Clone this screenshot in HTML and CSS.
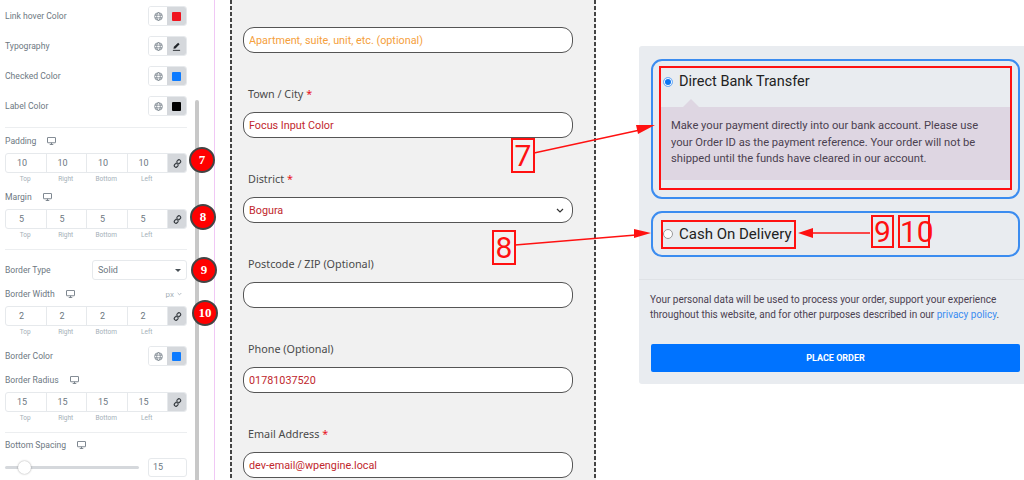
FILE: index.html
```html
<!DOCTYPE html>
<html>
<head>
    <title>Checkout widget style settings</title>
    <link rel="stylesheet" href="styles.css">
</head>
<body>
<svg class="icon-defs" width="0" height="0">
    <defs>
        <symbol id="globe" viewBox="0 0 10 10">
            <g fill="none" stroke="#6d7882" stroke-width=".8">
                <circle cx="5" cy="5" r="4.3"/>
                <ellipse cx="5" cy="5" rx="2" ry="4.3"/>
                <path d="M.8 3.5h8.4M.8 6.5h8.4"/>
            </g>
        </symbol>
        <symbol id="monitor" viewBox="0 0 10 9">
            <path d="M.9.5h8.2a.4.4 0 0 1 .4.4v5.2a.4.4 0 0 1-.4.4H.9a.4.4 0 0 1-.4-.4V.9A.4.4 0 0 1 .9.5z" fill="none" stroke="#6d7882"/>
            <path d="M3 8.5h4M5 6.5v2" stroke="#6d7882"/>
        </symbol>
        <symbol id="link" viewBox="0 0 10 10">
            <g fill="none" stroke="#33383d" stroke-width="1.3" stroke-linecap="round">
                <path d="M4.3 2.6l1-1a1.8 1.8 0 0 1 2.9 2.2L6.900 5.200a1.800 1.800 0 0 1-2.700 0"/>
                <path d="M5.700 7.400l-1 1a1.800 1.800 0 0 1-2.900-2.200L3.100 4.800a1.800 1.800 0 0 1 2.700 0"/>
            </g>
        </symbol>
    </defs>
</svg>

<div class="page">
    <aside class="panel">
        <div class="ctl-row"><span class="ctl-label">Link hover Color</span>
            <div class="ctl-pick"><span class="pick-global"><svg class="globe"><use href="#globe"/></svg></span><span class="pick-value"><i class="swatch swatch-red"></i></span></div>
        </div>
        <div class="ctl-row"><span class="ctl-label">Typography</span>
            <div class="ctl-pick"><span class="pick-global"><svg class="globe"><use href="#globe"/></svg></span><span class="pick-value">
                <svg class="pen" viewBox="0 0 10 10"><path d="M6.800.8l1.700 1.700-4.700 4.600-2.200.5.500-2.200z" fill="#22262a"/><path d="M1 9.300h8" stroke="#22262a"/></svg></span></div>
        </div>
        <div class="ctl-row"><span class="ctl-label">Checked Color</span>
            <div class="ctl-pick"><span class="pick-global"><svg class="globe"><use href="#globe"/></svg></span><span class="pick-value"><i class="swatch swatch-blue"></i></span></div>
        </div>
        <div class="ctl-row"><span class="ctl-label">Label Color</span>
            <div class="ctl-pick"><span class="pick-global"><svg class="globe"><use href="#globe"/></svg></span><span class="pick-value"><i class="swatch swatch-black"></i></span></div>
        </div>

        <hr class="ctl-rule first-rule">

        <div class="ctl-head head-padding"><span class="ctl-label">Padding</span><svg class="monitor"><use href="#monitor"/></svg></div>
        <div class="dims">
            <span>10</span><span>10</span><span>10</span><span>10</span>
            <b><svg class="link"><use href="#link"/></svg></b>
        </div>
        <div class="dim-names"><span>Top</span><span>Right</span><span>Bottom</span><span>Left</span></div>

        <div class="ctl-head"><span class="ctl-label">Margin</span><svg class="monitor"><use href="#monitor"/></svg></div>
        <div class="dims dims-tight">
            <span>5</span><span>5</span><span>5</span><span>5</span>
            <b><svg class="link"><use href="#link"/></svg></b>
        </div>
        <div class="dim-names"><span>Top</span><span>Right</span><span>Bottom</span><span>Left</span></div>

        <hr class="ctl-rule second-rule">

        <div class="border-type">
            <span class="ctl-label">Border Type</span>
            <div class="select-box">Solid<i class="caret"></i></div>
        </div>

        <div class="ctl-head head-width"><span class="ctl-label">Border Width</span><svg class="monitor"><use href="#monitor"/></svg><span class="unit">px <svg viewBox="0 0 6 4"><path d="M.8.8L3 3l2.200-2.200" fill="none" stroke="#a4afb7"/></svg></span></div>
        <div class="dims dims-tight">
            <span>2</span><span>2</span><span>2</span><span>2</span>
            <b><svg class="link"><use href="#link"/></svg></b>
        </div>
        <div class="dim-names"><span>Top</span><span>Right</span><span>Bottom</span><span>Left</span></div>

        <div class="ctl-row row-border-color"><span class="ctl-label">Border Color</span>
            <div class="ctl-pick"><span class="pick-global"><svg class="globe"><use href="#globe"/></svg></span><span class="pick-value"><i class="swatch swatch-blue"></i></span></div>
        </div>

        <div class="ctl-head head-radius"><span class="ctl-label">Border Radius</span><svg class="monitor"><use href="#monitor"/></svg></div>
        <div class="dims">
            <span>15</span><span>15</span><span>15</span><span>15</span>
            <b><svg class="link"><use href="#link"/></svg></b>
        </div>
        <div class="dim-names"><span>Top</span><span>Right</span><span>Bottom</span><span>Left</span></div>

        <hr class="ctl-rule third-rule">

        <div class="ctl-head"><span class="ctl-label">Bottom Spacing</span><svg class="monitor"><use href="#monitor"/></svg></div>
        <div class="slider-row">
            <div class="slider"><i class="slider-knob"></i></div>
            <div class="slider-value">15</div>
        </div>
    </aside>

    <div class="panel-scroll"><div class="scroll-thumb"></div></div>
    <div class="pink-line"></div>

    <main class="canvas">
        <input class="field first-field" type="text" placeholder="Apartment, suite, unit, etc. (optional)">

        <label class="field-label">Town / City <em>*</em></label>
        <input class="field" type="text" value="Focus Input Color">

        <label class="field-label">District <em>*</em></label>
        <div class="field field-select">Bogura
            <svg viewBox="0 0 8 5"><path d="M1 1l3 3 3-3" fill="none" stroke="#333" stroke-width="1.200"/></svg>
        </div>

        <label class="field-label">Postcode / ZIP (Optional)</label>
        <input class="field" type="text">

        <label class="field-label">Phone (Optional)</label>
        <input class="field" type="text" value="01781037520">

        <label class="field-label">Email Address <em>*</em></label>
        <input class="field" type="text" value="dev-email@wpengine.local">
    </main>

    <section class="payment">
        <div class="pay-card">
            <div class="pay-title title-bank"><i class="radio radio-on"></i>Direct Bank Transfer</div>
            <div class="pay-box">Make your payment directly into our bank account. Please use your Order ID as the payment reference. Your order will not be shipped until the funds have cleared in our account.</div>
        </div>
        <div class="pay-card pay-card-cod">
            <div class="pay-title"><i class="radio"></i>Cash On Delivery</div>
        </div>
        <hr class="pay-rule">
        <p class="pay-note">Your personal data will be used to process your order, support your experience throughout this website, and for other purposes described in our <a href="#">privacy policy</a>.</p>
        <button class="place-order">PLACE ORDER</button>
    </section>
</div>

<!-- annotations on top of the screenshot -->
<span class="badge badge-7">7</span>
<span class="badge badge-8">8</span>
<span class="badge badge-9">9</span>
<span class="badge badge-10">10</span>

<div class="mark-rect rect-bank"></div>
<div class="mark-rect rect-cod"></div>
<span class="mark-num num-7">7</span>
<span class="mark-num num-8">8</span>
<span class="mark-num num-9">9</span>
<span class="mark-num num-10">10</span>

<svg class="arrows" viewBox="0 0 1024 480">
    <path d="M534 153L640 130M515 245L636 235M870 233H812" stroke="#f11" stroke-width="1.300" fill="none"/>
    <path d="M655 125L638 134L636 125zM651 233L634 238L634 229zM798 233L813 228V238z" fill="#f11"/>
</svg>
</body>
</html>
```
FILE: styles.css
```css
* {
    box-sizing: border-box;
}
body {
    margin: 0;
    width: 1024px;
    height: 480px;
    overflow: hidden;
    position: relative;
    background: #fff;
    font-family: Roboto, sans-serif;
}
.icon-defs {
    position: absolute;
}
.page {
    display: flex;
    height: 480px;
    overflow: hidden;
}

/* left settings panel */
.panel {
    width: 195px;
    flex: none;
    padding: 1px 8px 0 5px;
}
.ctl-label {
    font-size: 8.600px;
    color: #6d7882;
    white-space: nowrap;
}
.ctl-row {
    height: 30px;
    display: flex;
    align-items: center;
    justify-content: space-between;
}
.ctl-pick {
    display: flex;
    width: 39px;
    height: 20px;
    border-radius: 3px;
    overflow: hidden;
    border: 1px solid #e6e9ec;
}
.pick-global {
    flex: 1;
    background: #fff;
    display: flex;
    align-items: center;
    justify-content: center;
}
.pick-value {
    width: 19px;
    background: #d5d8dc;
    display: flex;
    align-items: center;
    justify-content: center;
}
.globe {
    width: 9px;
    height: 9px;
}
.pen {
    width: 9px;
    height: 9px;
}
.swatch {
    width: 9px;
    height: 9px;
    border-radius: 1px;
}
.swatch-red { background: #f0141e; }
.swatch-blue { background: #0d7bff; }
.swatch-black { background: #000; }

.ctl-rule {
    border: 0;
    height: 1px;
    margin: 0;
    background: #eceef0;
}
.first-rule { margin-top: 6px; }
.second-rule { margin-top: 8px; }
.third-rule { margin-top: 8px; }

.ctl-head {
    height: 14px;
    margin-top: 5px;
    display: flex;
    align-items: center;
    gap: 11px;
}
.head-padding { margin-top: 6px; }
.head-width { margin-top: 7px; }
.head-radius { margin-top: 7px; }
.monitor {
    width: 9px;
    height: 8px;
}
.unit {
    margin-left: auto;
    margin-right: 5px;
    font-size: 8px;
    color: #a4afb7;
    display: flex;
    align-items: center;
    gap: 3px;
}
.unit svg {
    width: 5px;
    height: 4px;
}
.dims {
    margin-top: 5px;
    height: 20px;
    display: flex;
    border: 1px solid #e6e9ec;
    border-radius: 3px;
    overflow: hidden;
}
.dims span {
    width: 40.500px;
    padding-left: 11px;
    font-size: 9px;
    line-height: 18px;
    color: #6d7882;
    border-right: 1px solid #e6e9ec;
}
.dims-tight span {
    padding-left: 13px;
}
.dims b {
    flex: 1;
    background: #d5d8dc;
    display: flex;
    align-items: center;
    justify-content: center;
}
.link {
    width: 9px;
    height: 9px;
}
.dim-names {
    display: flex;
    height: 12px;
    padding-right: 20px;
}
.dim-names span {
    flex: 1;
    text-align: center;
    font-size: 6.500px;
    line-height: 13px;
    color: #a4afb7;
}
.border-type {
    margin-top: 10px;
    height: 20px;
    display: flex;
    align-items: center;
    justify-content: space-between;
}
.select-box {
    width: 95px;
    height: 20px;
    border: 1px solid #e6e9ec;
    border-radius: 3px;
    padding: 0 5px;
    display: flex;
    align-items: center;
    justify-content: space-between;
    font-size: 9px;
    color: #6d7882;
}
.caret {
    border: 3px solid transparent;
    border-top: 3px solid #495157;
    border-bottom: 0;
    margin-right: 0;
}
.row-border-color {
    height: 20px;
    margin-top: 8px;
}
.slider-row {
    margin-top: 6px;
    height: 19px;
    display: flex;
    align-items: center;
    justify-content: space-between;
}
.slider {
    position: relative;
    width: 134px;
    height: 3px;
    background: #d5d8dc;
    border-radius: 2px;
}
.slider-knob {
    position: absolute;
    left: 13px;
    top: -5px;
    width: 13px;
    height: 13px;
    border-radius: 50%;
    background: #fff;
    box-shadow: 0 0 2px rgba(0, 0, 0, 0.4);
}
.slider-value {
    width: 39px;
    height: 19px;
    border: 1px solid #e6e9ec;
    border-radius: 3px;
    padding-left: 4px;
    font-size: 9px;
    line-height: 17px;
    color: #6d7882;
}

.panel-scroll {
    width: 4px;
    flex: none;
    padding-top: 100px;
}
.scroll-thumb {
    height: 380px;
    background: #c8c8c8;
    border-radius: 2px 2px 0 0;
}
.pink-line {
    width: 1px;
    flex: none;
    margin-left: 15px;
    background: #f0c8f5;
}

/* checkout form, the dashes are drawn as backgrounds to get the short 4/2 rhythm */
.canvas {
    width: 366px;
    flex: none;
    margin-left: 15px;
    padding: 27px 23px 0 13px;
    background:
        repeating-linear-gradient(#444 0 4px, transparent 4px 6px) left top / 2px 100% no-repeat,
        repeating-linear-gradient(#444 0 4px, transparent 4px 6px) right top / 2px 100% no-repeat,
        #f1f1f1;
    height: 480px;
    overflow: hidden;
}
.field {
    display: block;
    width: 330px;
    height: 26px;
    padding: 0 5px;
    border: 1px solid #555;
    border-radius: 11px;
    background: #fff;
    outline: 0;
    font-family: Roboto, sans-serif;
    font-size: 10.800px;
    color: #c1272d;
}
.field::placeholder {
    color: #f5a03c;
    opacity: 1;
}
.field-select {
    display: flex;
    align-items: center;
    justify-content: space-between;
    padding-right: 8px;
}
.field-select svg {
    width: 8px;
    height: 5px;
}
.field-label {
    display: block;
    height: 16px;
    margin: 33px 0 10px 5px;
    font-family: "Noto Sans", sans-serif;
    font-size: 10.800px;
    line-height: 16px;
    color: #4a4a4a;
}
.field-label em {
    color: #e8111d;
    font-style: normal;
}

/* payment block */
.payment {
    width: 385px;
    height: 338px;
    flex: none;
    margin: 46px 0 0 43px;
    padding: 13px 4px 0 12px;
    background: #e9ecf0;
    border-radius: 3px 0 0 3px;
}
.pay-card {
    height: 140px;
    border: 2px solid #3b8cf0;
    border-radius: 11px;
    padding: 5px 7px;
}
.pay-card-cod {
    height: 46px;
    margin-top: 12px;
    padding-top: 6px;
}
.pay-title {
    display: flex;
    align-items: center;
    gap: 6px;
    height: 29px;
    padding-left: 3px;
    font-size: 15px;
    color: #222;
}
.title-bank {
    font-size: 14.500px;
    padding-top: 2px;
}
.radio {
    width: 10px;
    height: 10px;
    border-radius: 50%;
    background: #fff;
    border: 1px solid #999;
}
.radio-on {
    border: 1px solid #7db4f5;
    box-shadow: inset 0 0 0 1px #fff;
    background: #0d75f0;
}
.pay-box {
    position: relative;
    margin-top: 12px;
    padding: 11px 11px 0;
    height: 73px;
    background: #ded6e2;
    font-size: 11.200px;
    line-height: 16.700px;
    color: #4b4150;
}
.pay-box::before {
    content: "";
    position: absolute;
    left: 23px;
    top: -8px;
    border: 8px solid transparent;
    border-top: 0;
    border-bottom-color: #ded6e2;
}
.pay-rule {
    border: 0;
    height: 1px;
    margin: 22px -4px 0 -12px;
    background: #dfe2e6;
}
.pay-note {
    margin: 12px 0 0 -1px;
    font-size: 10px;
    line-height: 15px;
    color: #4b4150;
}
.pay-note a {
    color: #3b8cf0;
    text-decoration: none;
}
.place-order {
    display: block;
    width: 369px;
    height: 28px;
    margin-top: 22px;
    border: 0;
    border-radius: 2px;
    background: #0073ff;
    color: #fff;
    font-family: Roboto, sans-serif;
    font-size: 9px;
    font-weight: 700;
}

/* annotations */
.badge {
    position: absolute;
    width: 26px;
    height: 26px;
    border-radius: 50%;
    background: #f00;
    border: 2px solid #444;
    color: #fff;
    font-family: "Liberation Serif", serif;
    font-weight: 700;
    font-size: 13px;
    line-height: 22px;
    text-align: center;
}
.badge-7 { left: 189px; top: 147px; }
.badge-8 { left: 190px; top: 204px; }
.badge-9 { left: 191px; top: 257px; }
.badge-10 { left: 192px; top: 300px; }
.mark-rect {
    position: absolute;
    border: 2px solid #f11;
}
.rect-bank {
    left: 659px;
    top: 66px;
    width: 353px;
    height: 124px;
}
.rect-cod {
    left: 661px;
    top: 220px;
    width: 135px;
    height: 29px;
}
.mark-num {
    position: absolute;
    height: 35px;
    border: 2px solid #f11;
    color: #f11;
    font-size: 30px;
    line-height: 31px;
    text-align: center;
}
.num-7 { left: 511px; top: 138px; width: 24px; }
.num-8 { left: 492px; top: 230px; width: 24px; }
.num-9 { left: 871px; top: 215px; width: 23px; height: 33px; line-height: 29px; }
.num-10 { left: 898px; top: 215px; width: 32px; height: 33px; line-height: 29px; }
.arrows {
    position: absolute;
    left: 0;
    top: 0;
    width: 1024px;
    height: 480px;
    pointer-events: none;
}
```
